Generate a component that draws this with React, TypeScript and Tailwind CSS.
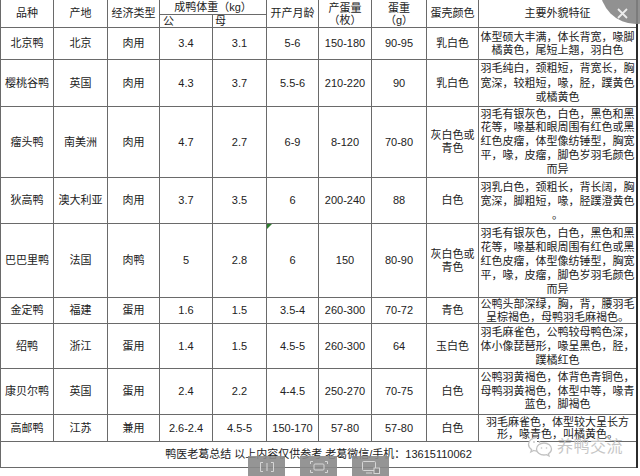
import React from 'react';

type Breed = {
  name: string;
  place: string;
  kind: string;
  male: string;
  female: string;
  age: string;
  eggs: string;
  weight: string;
  shell: string[];
  desc: string[];
  lead: string;
  flag?: boolean;
};

const breeds: Breed[] = [
  {
    name: '北京鸭', place: '北京', kind: '肉用', male: '3.4', female: '3.1', age: '5-6',
    eggs: '150-180', weight: '90-95', shell: ['乳白色'],
    desc: ['体型硕大丰满，体长背宽，喙脚', '橘黄色，尾短上翘，羽白色'],
    lead: 'leading-[13px]',
  },
  {
    name: '樱桃谷鸭', place: '英国', kind: '肉用', male: '4.3', female: '3.7', age: '5.5-6',
    eggs: '210-220', weight: '90', shell: ['乳白色'],
    desc: ['羽毛纯白，颈粗短，背宽长，胸', '宽深，较粗短，喙，胫，蹼黄色', '或橘黄色'],
    lead: 'leading-[14.5px]',
  },
  {
    name: '瘤头鸭', place: '南美洲', kind: '肉用', male: '4.7', female: '2.7', age: '6-9',
    eggs: '8-120', weight: '70-80', shell: ['灰白色或', '青色'],
    desc: [
      '羽毛有银灰色，白色，黑色和黑',
      '花等，喙基和眼周围有红色或黑',
      '红色皮瘤，体型像纺锤型，胸宽',
      '平，喙，皮瘤，脚色岁羽毛颜色',
      '而异',
    ],
    lead: 'leading-[13.8px]',
  },
  {
    name: '狄高鸭', place: '澳大利亚', kind: '肉用', male: '3.7', female: '3.5', age: '6',
    eggs: '200-240', weight: '88', shell: ['白色'],
    desc: ['羽乳白色，颈粗长，背长阔，胸', '宽深，脚粗短，喙，胫蹼澄黄色', '。'],
    lead: 'leading-[14px]',
  },
  {
    name: '巴巴里鸭', place: '法国', kind: '肉鸭', male: '5', female: '2.8', age: '6',
    eggs: '150', weight: '80-90', shell: ['灰白色或', '青色'],
    desc: [
      '羽毛有银灰色，白色，黑色和黑',
      '花等，喙基和眼周围有红色或黑',
      '红色皮瘤，体型像纺锤型，胸宽',
      '平，喙，皮瘤，脚色岁羽毛颜色',
      '而异',
    ],
    lead: 'leading-[14px]',
    flag: true,
  },
  {
    name: '金定鸭', place: '福建', kind: '蛋用', male: '1.6', female: '1.5', age: '3.5-4',
    eggs: '260-300', weight: '70-72', shell: ['青色'],
    desc: ['公鸭头部深绿，胸，背，腰羽毛', '呈棕褐色，母鸭羽毛麻褐色。'],
    lead: 'leading-[12.5px]',
  },
  {
    name: '绍鸭', place: '浙江', kind: '蛋用', male: '1.4', female: '1.5', age: '4.5-5',
    eggs: '260-300', weight: '64', shell: ['玉白色'],
    desc: ['羽毛麻雀色，公鸭较母鸭色深，', '体小像琵琶形，喙呈黑色，胫，', '蹼橘红色'],
    lead: 'leading-[14px]',
  },
  {
    name: '康贝尔鸭', place: '英国', kind: '蛋用', male: '2.4', female: '2.2', age: '4-4.5',
    eggs: '250-270', weight: '70-75', shell: ['白色'],
    desc: ['公鸭羽黄褐色，体背色青铜色，', '母鸭羽黄褐色，体型中等，喙青', '蓝色，脚褐色'],
    lead: 'leading-[13.5px]',
  },
  {
    name: '高邮鸭', place: '江苏', kind: '兼用', male: '2.6-2.4', female: '4.5-5', age: '150-170',
    eggs: '57-80', weight: '57-80', shell: ['白色'],
    desc: ['羽毛麻雀色，体型较大呈长方', '形，喙青色，叫橘黄色。'],
    lead: 'leading-[12px]',
  },
];

function Cell({ children, className = '' }: { children?: React.ReactNode; className?: string }) {
  return (
    <div className={'relative bg-white flex flex-col items-center justify-center text-center whitespace-nowrap ' + className}>
      {children}
    </div>
  );
}

function WeChatMark() {
  return (
    <svg width="26" height="22" viewBox="0 0 26 22" fill="none" stroke="#c2c2c2" strokeWidth="1.3">
      <path d="M10 1.5c-4.7 0-8.5 3-8.5 6.8 0 2.2 1.2 4 3.1 5.3l-.8 2.4 2.9-1.5c1 .3 2.1.5 3.3.5" fill="#fff" />
      <path d="M17 7c-4.2 0-7.5 2.7-7.5 6s3.3 6 7.5 6c.9 0 1.8-.1 2.6-.4l2.4 1.3-.6-2.1c1.9-1.1 3.1-2.9 3.1-4.8 0-3.3-3.3-6-7.5-6z" fill="#fff" />
      <circle cx="7" cy="6" r=".9" fill="#c2c2c2" stroke="none" />
      <circle cx="12.5" cy="6" r=".9" fill="#c2c2c2" stroke="none" />
      <circle cx="14.5" cy="12" r=".8" fill="#c2c2c2" stroke="none" />
      <circle cx="19.5" cy="12" r=".8" fill="#c2c2c2" stroke="none" />
    </svg>
  );
}

export default function App() {
  return (
    <div
      className="relative w-[640px] h-[476px] bg-white overflow-hidden text-[11px] text-[#222]"
      style={{ fontFamily: '"Liberation Sans", "Noto Sans CJK SC", sans-serif' }}
    >
      {/* table */}
      <div className="grid w-fit gap-px bg-[#6a6a6a] pl-px pb-px border-r-2 border-[#2c2c2c] grid-cols-[52px_53px_51px_52px_53px_51px_52px_54px_51px_157px] grid-rows-[14px_12px_31px_46px_70px_45px_73px_25px_44px_45px_26px_25px]">
        {/* header */}
        <Cell className="row-span-2">品种</Cell>
        <Cell className="row-span-2">产地</Cell>
        <Cell className="row-span-2">经济类型</Cell>
        <Cell className="col-span-2 leading-[13px]">成鸭体重（kg）</Cell>
        <Cell className="row-span-2">开产月龄</Cell>
        <Cell className="row-span-2 leading-[12px]">
          <div>产蛋量</div>
          <div>（枚）</div>
        </Cell>
        <Cell className="row-span-2 leading-[12px]">
          <div>蛋重</div>
          <div>（g）</div>
        </Cell>
        <Cell className="row-span-2">蛋壳颜色</Cell>
        <Cell className="row-span-2">主要外貌特征</Cell>
        <Cell className="!items-start !justify-start pl-[3px] leading-[12px]">公</Cell>
        <Cell className="!items-start !justify-start pl-[2px] leading-[12px]">母</Cell>

        {/* rows */}
        {breeds.map((b) => (
          <React.Fragment key={b.name}>
            <Cell>{b.name}</Cell>
            <Cell>{b.place}</Cell>
            <Cell>{b.kind}</Cell>
            <Cell>{b.male}</Cell>
            <Cell>{b.female}</Cell>
            <Cell>
              {b.flag && (
                <span className="absolute left-0 top-0 w-0 h-0 border-t-[5px] border-r-[5px] border-t-[#2f7d2f] border-r-transparent" />
              )}
              {b.age}
            </Cell>
            <Cell>{b.eggs}</Cell>
            <Cell>{b.weight}</Cell>
            <Cell className="leading-[13px]">
              {b.shell.map((s) => (
                <div key={s}>{s}</div>
              ))}
            </Cell>
            <Cell className={b.lead}>
              {b.desc.map((d, i) => (
                <div key={i}>{d}</div>
              ))}
            </Cell>
          </React.Fragment>
        ))}

        {/* footer */}
        <Cell className="col-span-10">鸭医老葛总结 以上内容仅供参考 老葛微信/手机：13615110062</Cell>
      </div>

      {/* watermark */}
      <div className="absolute left-[527px] top-[436px] flex items-center gap-[4px]">
        <WeChatMark />
        <span className="text-[16px] text-[#c6c6c6] leading-none tracking-[0.5px]">养鸭交流</span>
      </div>

      {/* close button */}
      <div className="absolute left-[600px] top-[-48px] w-[72px] h-[72px] rounded-full bg-[#858585]/90" />
      <svg className="absolute left-[617px] top-[8px]" width="11" height="11" viewBox="0 0 11 11" stroke="#ececec" strokeWidth="1.8">
        <path d="M1 1l9 9M10 1l-9 9" />
      </svg>

      {/* viewer toolbar */}
      <div className="absolute left-[248px] top-[456px] flex gap-[15px]">
        <div className="w-[37px] h-[24px] bg-[#8a8a8a]/90 flex items-start justify-center pt-[6px]">
          <svg width="14" height="10" viewBox="0 0 14 10" fill="none" stroke="#d6d6d6" strokeWidth="1">
            <path d="M3 .5H.5v9H3M11 .5h2.5v9H11M7 1v8" />
          </svg>
        </div>
        <div className="w-[37px] h-[24px] bg-[#8a8a8a]/90 flex items-start justify-center pt-[5px]">
          <svg width="18" height="12" viewBox="0 0 18 12" fill="none" stroke="#d6d6d6" strokeWidth="1">
            <path d="M.5 3V.5H3M15 .5h2.5V3M17.5 9v2.5H15M3 11.5H.5V9" />
            <rect x="4" y="3" width="10" height="6" rx="1" />
          </svg>
        </div>
        <div className="w-[37px] h-[24px] bg-[#8a8a8a]/90 flex items-start justify-center pt-[5px]">
          <svg width="18" height="13" viewBox="0 0 18 13" fill="none" stroke="#d6d6d6" strokeWidth="1">
            <rect x=".5" y=".5" width="13" height="9" rx="1" />
            <path d="M4 12h6" />
            <rect x="12" y="7" width="5.5" height="5.5" fill="#8a8a8a" />
          </svg>
        </div>
      </div>
    </div>
  );
}
